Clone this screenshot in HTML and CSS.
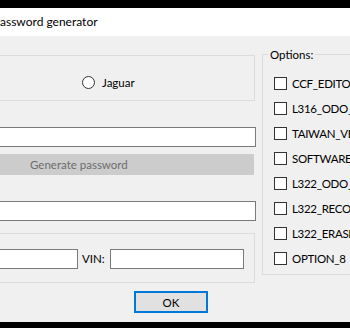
FILE: index.html
```html
<!DOCTYPE html>
<html lang="en">
<head>
    <meta charset="UTF-8">
    <title>Password generator</title>
    <link rel="stylesheet" href="styles.css">
</head>
<body>
    <div class="window">
        <div class="titlebar"><span class="title">Password generator</span></div>
        <div class="client">
            <div class="left">
                <div class="group model-group">
                    <label class="radio"><span class="radio-dot"></span>Jaguar</label>
                </div>
                <input class="edit first-edit" type="text">
                <button class="generate" disabled>Generate password</button>
                <input class="edit second-edit" type="text">
                <div class="group vin-group">
                    <input class="edit small-edit" type="text">
                    <span class="vin-label">VIN:</span>
                    <input class="edit vin-edit" type="text">
                </div>
                <div class="buttons">
                    <button class="ok">OK</button>
                </div>
            </div>
            <fieldset class="options">
                <legend>Options:</legend>
                <label class="check"><span class="box"></span>CCF_EDITOR</label>
                <label class="check"><span class="box"></span>L316_ODO_ADJUST</label>
                <label class="check"><span class="box"></span>TAIWAN_VERSION</label>
                <label class="check"><span class="box"></span>SOFTWARE_UPDATE</label>
                <label class="check"><span class="box"></span>L322_ODO_ADJUST</label>
                <label class="check"><span class="box"></span>L322_RECOVERY</label>
                <label class="check"><span class="box"></span>L322_ERASE</label>
                <label class="check"><span class="box"></span>OPTION_8</label>
            </fieldset>
        </div>
    </div>
</body>
</html>
```

FILE: styles.css
```css
html, body {
    margin: 0;
    height: 328px;
    overflow: hidden;
    background: #000;
}
body {
    font-family: Lato, "Liberation Sans", sans-serif;
    font-size: 11.5px;
    color: #000;
}
.window {
    margin-top: 8px;
    height: 314px;
    background: #f0f0f0;
}
.titlebar {
    height: 28px;
    background: #fff;
    font-size: 12px;
    line-height: 27px;
    white-space: nowrap;
    overflow: hidden;
}
.title {
    display: inline-block;
    margin-left: -7px;
}
.client {
    display: flex;
    padding-top: 19px;
}
.left {
    margin-left: -10px;
    width: 266px;
    flex-shrink: 0;
    display: flex;
    flex-direction: column;
}
.group {
    border: 1px solid #dcdcdc;
    box-sizing: border-box;
    margin-right: 1px;
}
.model-group {
    height: 46px;
    padding: 20px 0 0 91px;
}
.radio {
    display: flex;
    align-items: center;
    height: 13px;
}
.radio-dot {
    width: 11px;
    height: 11px;
    border: 1px solid #333;
    border-radius: 50%;
    background: #fff;
    margin-right: 7px;
}
.edit {
    box-sizing: border-box;
    height: 20px;
    margin: 0;
    border: 1px solid #7a7a7a;
    background: #fff;
    padding: 0;
}
.first-edit {
    margin-top: 26px;
}
.generate {
    margin-top: 7px;
    height: 21px;
    margin-right: 2px;
    border: 1px solid #cccccc;
    background: #cccccc;
    color: #6d6d6d;
    font: inherit;
    text-align: left;
    padding: 0 0 0 39px;
}
.second-edit {
    margin-top: 26px;
}
.vin-group {
    margin-top: 12px;
    height: 50px;
    display: flex;
    align-items: center;
    padding-top: 1px;
}
.small-edit {
    width: 87px;
}
.vin-label {
    margin-left: 4px;
    width: 28px;
}
.vin-edit {
    width: 134px;
}
.buttons {
    display: flex;
    padding-left: 144px;
    margin-top: 8px;
}
.ok {
    width: 74px;
    height: 22px;
    margin: 0;
    border: 2px solid #0078d7;
    background: #e1e1e1;
    font: inherit;
    color: #000;
    padding: 0;
}
.options {
    margin: -8px 0 0 6px;
    padding: 15px 0 0 11px;
    border: 1px solid #dcdcdc;
    height: 228px;
    width: 120px;
    box-sizing: border-box;
    flex-shrink: 0;
    display: flex;
    flex-direction: column;
    gap: 12px;
}
.options legend {
    padding: 0 2px;
    margin-left: -6px;
    line-height: 15px;
}
.check {
    display: flex;
    align-items: center;
    height: 13px;
    white-space: nowrap;
    letter-spacing: -0.3px;
}
.box {
    width: 11px;
    height: 11px;
    border: 1px solid #333;
    background: #fff;
    margin-right: 5px;
    flex-shrink: 0;
}
```
